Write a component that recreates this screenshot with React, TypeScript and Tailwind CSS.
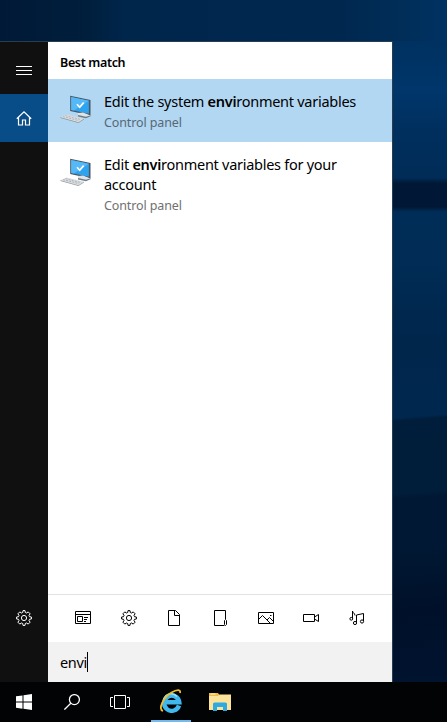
import type { ReactNode } from "react";

function LaptopIcon() {
  return (
    <svg width="32" height="32" viewBox="0 0 32 32" className="shrink-0">
      <path d="M10.2.8 30.5 5v15.4L10.2 16z" fill="#4b5660" />
      <path d="M11.2 2 28.9 5.8v13L11.2 14.9z" fill="#2ea3f0" />
      <path d="M11.2 2 28.9 5.8 14 15.5l-2.8-.6z" fill="#55b8f7" />
      <path d="m17 9.3 2.7 3 4-4.7" fill="none" stroke="#fff" strokeWidth="1.7" />
      <path d="m18 18 5-.5 7.5 2.9-4.5 2-8-1.5z" fill="#dfe4e8" />
      <path d="m18 20 8 1.8 4.5-1.6v1l-4.5 2-8-1.8z" fill="#707b84" />
      <path d="m.4 22.3 6-2.8 17.6 4.2-5.6 3.5z" fill="#dadddf" />
      <path d="m.4 22.3 18 4.9 5.6-3.5v.8l-5.6 3.4-18-4.9z" fill="#8e979d" />
      <path d="m3 21.6 15.7 4M5.5 20.6l15.5 4" stroke="#a9b0b5" strokeWidth=".9" strokeDasharray="2 1.2" />
    </svg>
  );
}

function GearIcon() {
  return (
    <svg width="16" height="16" viewBox="0 0 16 16" fill="none" stroke="currentColor" strokeWidth="1" strokeLinejoin="round">
      <path d="M6.7 2.500 7 .6h2l.3 1.900 1.300.5 1.600-1.100 1.900 1.900L13 5.400l.5 1.300 1.900.3v2l-1.900.3-.5 1.300 1.100 1.600-1.900 1.900-1.600-1.100-1.300.5-.3 1.900H7l-.3-1.900-1.300-.5-1.600 1.100-1.900-1.900L3 10.600l-.5-1.300L.6 9V7l1.900-.3L3 5.400 1.900 3.800l1.900-1.900L5.400 3z" />
      <circle cx="8" cy="8" r="2.600" />
    </svg>
  );
}

function LineIcon({ children }: { children: ReactNode }) {
  return (
    <svg width="16" height="16" viewBox="0 0 16 16" fill="none" stroke="currentColor" strokeWidth="1">
      {children}
    </svg>
  );
}

function Filters() {
  return (
    <div className="flex h-12 shrink-0 items-start justify-between border-t border-[#e2e2e2] pt-[15px] pr-[27px] pl-[27px] text-black">
      <LineIcon>
        <path d="M.5 1.500h15v12H.5zM.5 4.500h15M2.500 6.500h5v5h-5zM9 7.500h4M9 9.500h3M9 11.500h2" />
      </LineIcon>
      <GearIcon />
      <LineIcon>
        <path d="M2.500.5h7l4 4v11h-11zM8.500.5v5h5" />
      </LineIcon>
      <LineIcon>
        <path d="M13.500 9V.5h-11v15h10M12.500 10.500q1-2 2 0v4q-1 2-2 0z" />
      </LineIcon>
      <LineIcon>
        <path d="M.5 2.500h15v11H.5zM.5 9.500l4-4 8 8M9 10l2.500-2.500 4 4" />
        <path d="M12 5.500h1.500" />
      </LineIcon>
      <LineIcon>
        <path d="M.5 4.500h11v7H.5zM11.500 7l4-2.500v7l-4-2.500" />
      </LineIcon>
      <LineIcon>
        <path d="M3.500 8.500V1c0 2 2.500 2 2.500 4.500M7.500 12.500V5l7-1.500v7.500" />
        <circle cx="2.300" cy="8.800" r="1.400" />
        <circle cx="6" cy="13" r="1.600" />
        <circle cx="13" cy="11.500" r="1.600" />
      </LineIcon>
    </div>
  );
}

function Sidebar() {
  return (
    <div className="flex w-12 shrink-0 flex-col justify-between bg-[#101010] text-white">
      <div className="pt-1">
        <div className="flex h-12 items-center justify-center">
          <LineIcon>
            <path d="M0 4.500h16M0 8.500h16M0 12.500h16" />
          </LineIcon>
        </div>
        <div className="flex h-12 items-center justify-center bg-[#084d87]">
          <svg width="16" height="16" viewBox="0 0 16 16" fill="none" stroke="currentColor" strokeWidth="1.200">
            <path d="M.8 8.800 8 1.800l7.200 7M2.500 7.500V15h4v-5h3v5h4V7.500" />
          </svg>
        </div>
      </div>
      <div className="flex h-[88px] justify-center pt-4">
        <GearIcon />
      </div>
    </div>
  );
}

function Taskbar() {
  return (
    <div className="flex h-10 shrink-0 bg-[#010305] text-white">
      <div className="flex w-12 items-center justify-center">
        <svg width="16" height="16" viewBox="0 0 16 16" fill="currentColor">
          <path d="M0 2.300 6.500 1.400v6.100H0zM7.500 1.200 16 0v7.500H7.500zM0 8.500h6.500v6.200L0 13.800zM7.500 8.500H16V16l-8.500-1.200z" />
        </svg>
      </div>
      <div className="flex w-12 items-center justify-center">
        <svg width="16" height="16" viewBox="0 0 16 16" fill="none" stroke="currentColor" strokeWidth="1.250">
          <circle cx="10.400" cy="5.600" r="5" />
          <path d="M6.800 9.200.4 15.600" />
        </svg>
      </div>
      <div className="flex w-12 items-center justify-center">
        <svg width="20" height="16" viewBox="0 0 20 16" fill="none" stroke="currentColor">
          <path d="M4.500 1.500h11v13h-11zM3 3.500H.5v9H3M17 3.500h2.500v9H17" />
        </svg>
      </div>
      <div className="flex w-[54px] justify-center">
        <div className="flex w-10 justify-center border-b-2 border-[#76b9ed] pt-[7px]">
          <svg width="24" height="24" viewBox="0 0 24 24" fill="none">
            <path d="M20 16.500a7.600 7.600 0 1 1 .3-3.200H6.500" stroke="#42b9ee" strokeWidth="4.400" />
            <path d="M4.500 10.500c2-6 9.500-8 13.500-3" stroke="#a0e3fb" strokeWidth="1.500" />
            <path d="M4 22C-1.500 20.500 4.500 8 12.500 3.500c6-3.500 9.500-3 8.500.5" stroke="#f2bd27" strokeWidth="1.800" />
          </svg>
        </div>
      </div>
      <div className="flex w-11 items-center justify-center">
        <svg width="22" height="20" viewBox="0 0 22 20">
          <path d="M0 1h9l1.500 2H22v15H0z" fill="#eebc45" />
          <path d="M0 4h9l1.500-1.500H22V18H0z" fill="#fde399" />
          <path d="M1.500 2h5" stroke="#fff3c8" />
          <path d="M4 19v-7q0-1.500 1.500-1.500h11q1.500 0 1.500 1.500v7h-4v-4H8v4z" fill="#2caae1" />
        </svg>
      </div>
    </div>
  );
}

export default function App() {
  return (
    <div className="flex h-[722px] w-[447px] flex-col overflow-hidden bg-[#00152c] font-['Noto_Sans','Open_Sans',sans-serif]">
      <div className="h-[41px] shrink-0 bg-[linear-gradient(90deg,#001936,#001f3d_20%,#00264c_28%,#00274e_75%,#002c55_86%,#003262)]" />
      <div className="flex h-[641px] shrink-0">
        <div className="flex w-[393px] shrink-0 border-t border-r border-[#2a3d50]">
          <Sidebar />
          <div className="flex min-w-0 flex-1 flex-col bg-white">
            <div className="h-[37px] shrink-0 pt-3 pl-3 text-[12.500px] leading-[18px] font-semibold tracking-[-0.350px] text-black">
              Best match
            </div>
            <div className="flex h-[63px] shrink-0 bg-[#b2d7f2] pt-4 pl-3">
              <LaptopIcon />
              <div className="-mt-1 pl-3 whitespace-nowrap">
                <div className="text-[14.500px] leading-5 tracking-[-0.270px] text-black">
                  Edit the system <span className="font-semibold">envi</span>ronment variables
                </div>
                <div className="pt-px text-[12.500px] leading-[21px] tracking-[-0.120px] text-[#566875]">Control panel</div>
              </div>
            </div>
            <div className="flex h-[83px] shrink-0 pt-4 pl-3">
              <LaptopIcon />
              <div className="-mt-1 pl-3 whitespace-nowrap">
                <div className="text-[14.500px] leading-5 tracking-[-0.270px] text-black">
                  Edit <span className="font-semibold">envi</span>ronment variables for your
                  <br />
                  account
                </div>
                <div className="pt-px text-[12.500px] leading-[21px] tracking-[-0.120px] text-[#707070]">Control panel</div>
              </div>
            </div>
            <div className="flex-1" />
            <Filters />
            <div className="flex h-10 shrink-0 items-center bg-[#f2f2f2] pl-3 text-[14.500px] tracking-[-0.350px] text-black">
              <span className="pt-0.5">envi</span>
              <span className="h-5 w-px bg-black" />
            </div>
          </div>
        </div>
        <div className="flex flex-1 flex-col">
          <div className="h-[300px] bg-[linear-gradient(180deg,#003160,#00366b_50px,#002f5e_90px,#002c57_137px,#001835_142px,#001835_166px,#002d57_171px,#002c55_220px,#00264c)]" />
          <div className="flex-1 bg-[linear-gradient(175.500deg,#00264c,#00274e_77px,#001e3b_80px,#001d39_153px,#001833_158px,#001833_210px,#00102a_270px,#00132f)]" />
        </div>
      </div>
      <Taskbar />
    </div>
  );
}
